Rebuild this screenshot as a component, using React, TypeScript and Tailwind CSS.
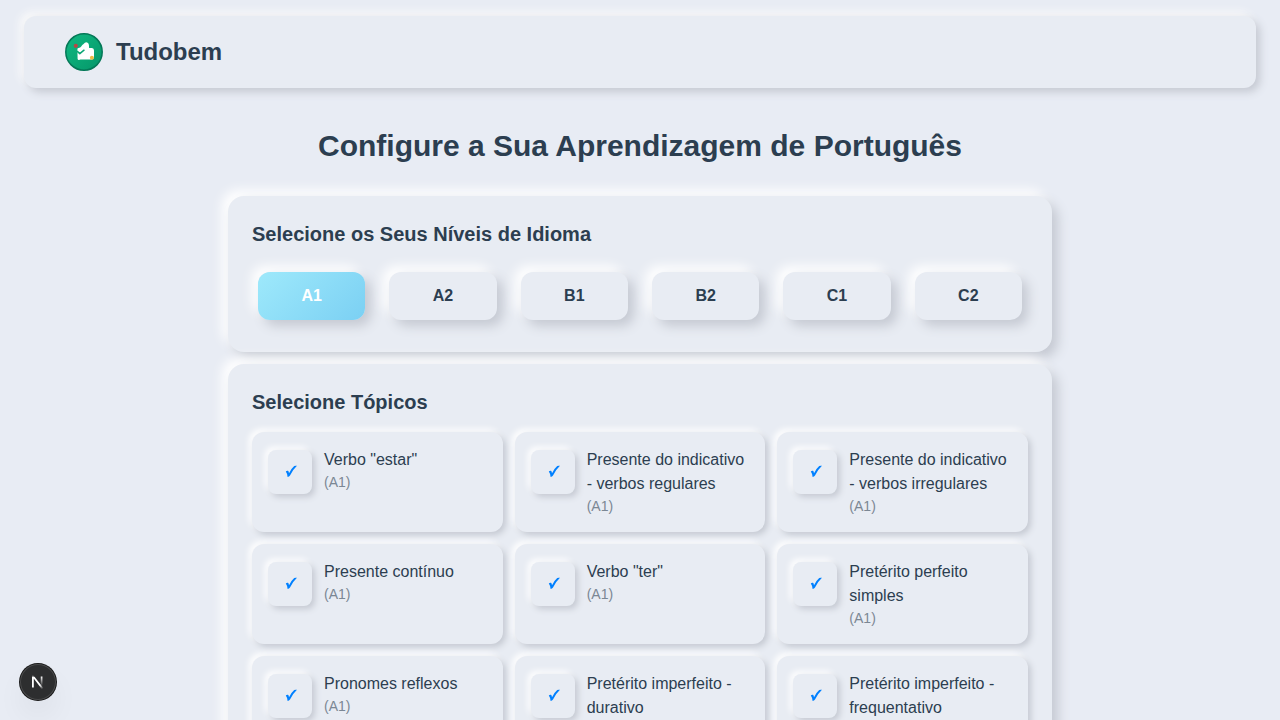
import { useState } from "react";

const levels = ["A1", "A2", "B1", "B2", "C1", "C2"];

const topics = [
  { name: 'Verbo "estar"', level: "A1" },
  { name: "Presente do indicativo - verbos regulares", level: "A1" },
  { name: "Presente do indicativo - verbos irregulares", level: "A1" },
  { name: "Presente contínuo", level: "A1" },
  { name: 'Verbo "ter"', level: "A1" },
  { name: "Pretérito perfeito simples", level: "A1" },
  { name: "Pronomes reflexos", level: "A1" },
  { name: "Pretérito imperfeito - durativo", level: "A1" },
  { name: "Pretérito imperfeito - frequentativo", level: "A1" },
];

function Logo() {
  return (
    <svg className="size-10" viewBox="0 0 40 40" aria-hidden="true">
      <defs>
        <linearGradient id="logo-green" x1="0" y1="0" x2="1" y2="1">
          <stop offset="0" stopColor="#10b981" />
          <stop offset="1" stopColor="#059669" />
        </linearGradient>
      </defs>
      <circle cx="20" cy="20" r="18.2" fill="url(#logo-green)" stroke="#047857" strokeWidth="1.5" />
      <path
        d="M13.4 17 Q13.6 16 14.6 16 Q16.4 15.8 17.2 14.4 Q18.2 12.6 19.6 12 Q20.8 10.3 22.3 10.3 Q24.6 10.7 24.9 12.8 L25.1 16 H28 Q30 16.4 30 18.4 V25.6 Q29.8 27.3 28.2 27.4 H16.4 L15 28 Q13.6 28 13.6 26.8 Z"
        fill="#fff"
      />
      <path d="M13.6 19.6 L15.8 21.6 L20 18.2" fill="none" stroke="#0aa674" strokeWidth="1.5" strokeLinecap="round" strokeLinejoin="round" />
      <circle cx="11.8" cy="13.8" r="2.1" fill="#b94545" />
      <circle cx="27.9" cy="25.8" r="2" fill="#eebb44" />
    </svg>
  );
}

function DevIcon() {
  return (
    <svg className="size-9" viewBox="0 0 40 40" fill="none" aria-hidden="true">
      <defs>
        <linearGradient id="n-diagonal" x1="9.955" y1="11.1226" x2="15.4785" y2="17.9671" gradientUnits="userSpaceOnUse">
          <stop stopColor="white" />
          <stop offset="0.604" stopColor="white" stopOpacity="0" />
          <stop offset="1" stopColor="white" stopOpacity="0" />
        </linearGradient>
        <linearGradient id="n-stem" x1="11.8222" y1="1.40039" x2="11.792" y2="12" gradientUnits="userSpaceOnUse">
          <stop stopColor="white" />
          <stop offset="1" stopColor="white" stopOpacity="0" />
        </linearGradient>
        <mask id="n-mask" maskUnits="userSpaceOnUse" x="0" y="0" width="20" height="20">
          <rect width="20" height="20" fill="white" />
          <rect width="5" height="1.5" fill="black" />
        </mask>
      </defs>
      <g transform="translate(12 12.4)">
        <path d="M14.2 16.4 L2.34 1 V13.6" stroke="url(#n-diagonal)" strokeWidth="2" mask="url(#n-mask)" />
        <path d="M12 1.5 V13.6" stroke="url(#n-stem)" strokeWidth="1.9" />
      </g>
    </svg>
  );
}

function Check() {
  return (
    <svg
      className="pointer-events-none col-start-1 row-start-1 hidden size-11 peer-checked:block"
      viewBox="0 0 44 44"
      aria-hidden="true"
    >
      <path
        d="M17.8 21.6 Q18.8 20.5 20 20.8 Q20.7 21.3 21 23.2 Q23.2 18.8 26.2 16.1 Q27.2 15.4 29 15.8 Q24.8 19.6 22 25.6 Q21.2 26.9 19.6 26.9 Q19.2 23.4 17.8 21.6 Z"
        fill="#0080ff"
      />
    </svg>
  );
}

const panel =
  "rounded-2xl bg-[#e8ecf3] p-6 shadow-[6px_6px_12px_#c5c9d2,-6px_-6px_12px_#ffffff]";

export default function App() {
  const [selected, setSelected] = useState<string[]>(["A1"]);
  const [off, setOff] = useState<string[]>([]);
  const toggle = (list: string[], item: string) =>
    list.includes(item) ? list.filter((i) => i !== item) : [...list, item];

  return (
    <div className="min-h-screen bg-[#e8ecf4] font-['Liberation_Sans',Arial,sans-serif] text-[#2c3e50]">
      <div className="px-6 pt-4">
        <header className="flex h-18 items-center gap-3 rounded-xl bg-[#e8ecf3] px-10 shadow-[4px_4px_8px_#c5c9d2,-4px_-4px_8px_#fafafa]">
          <Logo />
          <span className="text-2xl font-bold">Tudobem</span>
        </header>
      </div>

      <main className="mx-auto flex max-w-[872px] flex-col gap-3 px-6 pt-10 pb-6">
        <h1 className="mb-5 text-center text-3xl leading-9 font-bold">
          Configure a Sua Aprendizagem de Português
        </h1>

        <section className={panel}>
          <h2 className="mb-4 text-xl leading-7 font-bold">Selecione os Seus Níveis de Idioma</h2>
          <div className="grid grid-cols-3 gap-6 px-1.5 py-2 sm:grid-cols-6">
            {levels.map((level) => (
              <button
                key={level}
                type="button"
                aria-pressed={selected.includes(level)}
                onClick={() => setSelected(toggle(selected, level))}
                className={
                  "h-12 rounded-xl text-base font-bold shadow-[6px_6px_12px_#c5c9d2,-6px_-6px_12px_#ffffff] " +
                  (selected.includes(level)
                    ? "bg-linear-135 from-[#9ee9fb] to-[#7bd0f3] text-white"
                    : "bg-[#e8ecf3]")
                }
              >
                {level}
              </button>
            ))}
          </div>
        </section>

        <section className={panel}>
          <h2 className="mb-4 text-xl leading-7 font-bold">Selecione Tópicos</h2>
          <div className="grid grid-cols-1 gap-3 sm:grid-cols-3">
            {topics.map((topic) => (
              <label
                key={topic.name}
                className="flex min-h-25 cursor-pointer items-start gap-3 rounded-xl bg-[#e8ecf3] p-4 shadow-[3px_3px_6px_#c5c9d2,-3px_-3px_6px_#ffffff]"
              >
                <span className="mt-0.5 grid shrink-0">
                  <input
                    type="checkbox"
                    checked={!off.includes(topic.name)}
                    onChange={() => setOff(toggle(off, topic.name))}
                    className="peer col-start-1 row-start-1 size-11 appearance-none rounded-lg bg-[#e8ecf3] shadow-[3px_3px_6px_#c5c9d2,-3px_-3px_6px_#ffffff]"
                  />
                  <Check />
                </span>
                <span className="min-w-0 flex-1">
                  <span className="block text-base leading-6">{topic.name}</span>
                  <span className="block text-sm leading-5 text-[#7b8794]">({topic.level})</span>
                </span>
              </label>
            ))}
          </div>
        </section>
      </main>

      <button
        type="button"
        aria-label="Open developer tools"
        className="fixed bottom-5 left-5 size-9 rounded-full bg-[#2d2e2f] shadow-[0_0_0_1px_#171717,inset_0_0_0_1px_rgba(255,255,255,0.14),0_16px_32px_-8px_rgba(0,0,0,0.16)]"
      >
        <DevIcon />
      </button>
    </div>
  );
}
